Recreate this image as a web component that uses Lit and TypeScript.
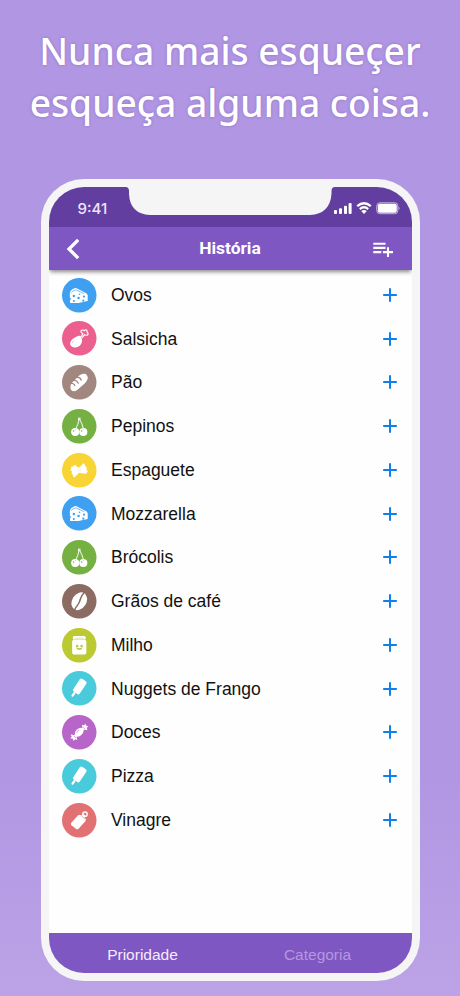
import { LitElement, html, css, svg, SVGTemplateResult } from "lit";
import { customElement, property } from "lit/decorators.js";

type IconName = "cheese" | "meat" | "bread" | "cherry" | "pasta" | "coffee" | "jar" | "frozen" | "candy" | "sauce";

const COLORS: Record<IconName, string> = {
  cheese: "#3f9ff0",
  meat: "#ec6090",
  bread: "#a1877f",
  cherry: "#75b043",
  pasta: "#f9d435",
  coffee: "#8c6c62",
  jar: "#bcca32",
  frozen: "#4acbdc",
  candy: "#b765c8",
  sauce: "#e27174",
};

// Glyphs are drawn around the origin; the disc has a radius of 51 units.
const GLYPHS: Record<IconName, (bg: string) => SVGTemplateResult> = {
  cheese: (bg) => svg`
    <path d="M-28-4Q-28-16-14-21Q-9-22-5-19L22-5L25 0V17L-2 23H-27Z"/>
    <path d="M-24-8Q-20-13-10-16L14-5" fill="none" stroke=${bg} stroke-width="2"/>
    <g fill=${bg}><circle cx="-16" cy="2" r="3.6"/><circle cx="-2" cy="8" r="3.6"/><circle cx="-16" cy="17" r="3"/>
    <circle cx="14" cy="4" r="3.2"/><circle cx="12" cy="16" r="3.2"/><circle cx="1" cy="-3" r="2.3"/><circle cx="-26" cy="11" r="2.3"/></g>`,
  meat: (bg) => svg`
    <path d="M4-7Q-2-9-10-4Q-28 5-27 17Q-25 28-10 27Q4 25 8 11Q9 3 7-1Z"/>
    <path d="M4-3L11-13Q4-17 5-22Q9-27 15-22Q20-28 23-22Q22-19 25-16Q28-11 23-9Q18-8 16-11L8-1" fill="none" stroke="#fff" stroke-width="3.4" stroke-linejoin="round"/>
    <path d="M-21 14Q-20 9-15 7" fill="none" stroke=${bg} stroke-width="1.3"/>`,
  bread: (bg) => svg`
    <path d="M-26 16Q-28 8-20 0L0-20Q8-27 17-25Q26-21 25-10Q24-5 16 4L-6 23Q-16 30-23 24Q-26 21-26 16Z"/>
    <g fill="none" stroke=${bg} stroke-width="3.5" stroke-linecap="round"><path d="M-24 3Q-15 3-13 10"/><path d="M-16-6Q-6-6-3 3"/><path d="M-7-15Q3-15 6-6"/></g>`,
  cherry: (bg) => svg`
    <g fill="none" stroke="#fff" stroke-width="2.8"><path d="M0-23Q-3-5-11 9M0-23Q9-7 13 9"/></g>
    <circle cx="0" cy="-22" r="4"/><circle cx="0" cy="-22" r="1.4" fill=${bg}/>
    <circle cx="-12" cy="17" r="12"/><circle cx="12" cy="17" r="12"/>
    <g fill=${bg}><path d="M-17 6Q-11 11-6 6L-11 10Z"/><path d="M7 6Q13 11 18 6L12 10Z"/><circle cx="-17" cy="14" r="2.2"/><circle cx="7" cy="14" r="2.2"/></g>`,
  pasta: (bg) => svg`
    <path d="M-23-12L-17-11L-14-16L-9-13Q-4-5 3-10L12-21L16-18L18-12L22-9L21-3L25 2L22 9L17 10L7 9Q0 5-4 11L-14 21L-18 19L-19 13L-23 10L-21 4L-26 0L-24-5Z"/>
    <path d="M-5-4L0 0L-3 4M6-5L2-1L4 3" fill="none" stroke=${bg} stroke-width="1"/>`,
  coffee: (bg) => svg`
    <ellipse rx="21" ry="28" transform="rotate(32)"/>
    <path d="M15-26Q7-18 4-8Q1 4-4 10Q-10 17-14 27" fill="none" stroke=${bg} stroke-width="4.5"/>`,
  jar: (bg) => svg`
    <path d="M-16-27H16L19-24V-19L17-17Q21-14 21-10V22Q21 26 17 27H-17Q-21 26-21 22V-10Q-21-14-17-17L-19-19V-24Z"/>
    <path d="M-17-17H17M-14-21H14" stroke=${bg} stroke-width="1.3" fill="none"/>
    <g fill=${bg}><circle cx="-6" cy="2" r="3.8"/><circle cx="7" cy="2" r="3.8"/><path d="M-10 5Q0 12 10 6L7 12Q0 17-7 11Z"/></g>`,
  frozen: () => svg`
    <path d="M1-26Q5-31 10-27L20-20Q24-17 20-12L1 16Q-2 20-6 17L-17 9Q-21 6-17 2Z"/>
    <path d="M-14 14L-20 22" stroke="#fff" stroke-width="6.500" stroke-linecap="round"/>`,
  candy: (bg) => svg`
    <path d="M-12 13Q-16 1-7-8Q2-16 13-12Q15-1 6 8Q-2 15-12 13Z"/>
    <path d="M10-9L8-22L14-20L18-26L20-20L27-17L22-13L24-6ZM-9 9L-26 7L-22 13L-27 18L-19 19L-17 26L-12 21L-6 23Z"/>
    <path d="M-8 2Q-6-4 0-7M-15 11L-10 17M11-15L16-10" fill="none" stroke=${bg} stroke-width="1.8"/>`,
  sauce: (bg) => svg`
    <path d="M-24 8L-4-14Q0-18 5-15L18-5Q21-1 18 3L-2 25Q-6 28-10 25L-23 15Q-26 12-24 8Z"/>
    <path d="M6-14L10-20L19-13L14-6Z"/>
    <circle cx="17" cy="-18" r="6.500" fill="none" stroke="#fff" stroke-width="4"/>
    <path d="M7-12L16-5" stroke=${bg} stroke-width="1.5"/>`,
};

const ITEMS: [string, IconName][] = [
  ["Ovos", "cheese"],
  ["Salsicha", "meat"],
  ["Pão", "bread"],
  ["Pepinos", "cherry"],
  ["Espaguete", "pasta"],
  ["Mozzarella", "cheese"],
  ["Brócolis", "cherry"],
  ["Grãos de café", "coffee"],
  ["Milho", "jar"],
  ["Nuggets de Frango", "frozen"],
  ["Doces", "candy"],
  ["Pizza", "frozen"],
  ["Vinagre", "sauce"],
];

@customElement("category-icon")
class CategoryIcon extends LitElement {
  @property() name: IconName = "cheese";
  static styles = css`
    :host { display: block; width: 34.5px; height: 34.5px; }
    svg { display: block; width: 100%; height: 100%; overflow: visible; }
  `;
  render() {
    const bg = COLORS[this.name];
    return html`<svg viewBox="-51 -51 102 102"><circle r="51" fill=${bg}></circle><g fill="#fff">${GLYPHS[this.name](bg)}</g></svg>`;
  }
}

@customElement("history-row")
class HistoryRow extends LitElement {
  @property() label = "";
  @property() icon: IconName = "cheese";
  static styles = css`
    :host { display: flex; align-items: center; height: 43.75px; padding: 0 14px 0 13.5px; box-sizing: border-box; }
    .label { flex: 1; margin-left: 14.5px; font-size: 17.5px; line-height: 22px; color: #111; white-space: nowrap; }
    .add { display: block; width: 16px; height: 16px; }
  `;
  render() {
    return html`<category-icon .name=${this.icon}></category-icon>
      <span class="label">${this.label}</span>
      <svg class="add" viewBox="0 0 16 16"><path d="M8 1.200v13.600M1.200 8h13.600" stroke="#0f7fea" stroke-width="2"/></svg>`;
  }
}

@customElement("app-root")
class AppRoot extends LitElement {
  static styles = css`
    :host {
      display: flex; flex-direction: column; align-items: center;
      width: 460px; height: 996px; box-sizing: border-box; padding-top: 24.5px; overflow: hidden;
      background: linear-gradient(#b196e3 0 78%, #bca3e6 100%);
      font-family: "Liberation Sans", Arial, sans-serif;
    }
    h1 {
      margin: 0; height: 154px; text-align: center; color: #fff; white-space: nowrap;
      font: 500 37.2px/52px "Noto Sans", sans-serif;
      text-shadow: 0 0 3px rgba(80, 50, 140, 0.35);
    }
    .line { display: block; }
    .phone {
      width: 379px; height: 802.5px; box-sizing: border-box; padding: 8px;
      background: #f5f5f5; border-radius: 43px;
    }
    .screen {
      position: relative; display: flex; flex-direction: column; height: 100%;
      background: #fefefe; border-radius: 35px; overflow: hidden;
    }
    .status {
      display: flex; justify-content: space-between; flex: none; height: 40.5px; box-sizing: border-box;
      padding: 0 12px 0 29px; background: #623ea1;
    }
    .time { margin-top: 12px; font: 500 15px/20px Inter, sans-serif; color: #efe5fb; }
    .notch { position: absolute; left: 75px; top: -1px; width: 213px; height: 30px; fill: #f5f5f5; }
    .signals { margin-top: 14px; width: 67px; height: 14px; }
    .header {
      display: grid; grid-template-columns: 40px 1fr 40px; align-items: center; flex: none; height: 43px;
      padding: 0 14px; background: #7e57c2; color: #fff; box-shadow: 0 3px 4px -1px rgba(0, 0, 0, 0.45); z-index: 1;
    }
    .title { text-align: center; margin-bottom: 2px; font: 700 17.4px/22px Roboto, sans-serif; }
    .back { width: 20px; height: 22px; }
    .playlist { width: 22px; height: 20px; justify-self: end; margin-right: 4px; }
    .list { flex: 1; padding-top: 3px; }
    .tabs {
      display: grid; grid-template-columns: 175px 175px; justify-content: center; align-items: center; flex: none;
      height: 40px; padding-top: 3px; box-sizing: border-box; background: #7e57c2; color: #f7ebff;
      font-size: 15.5px; text-align: center;
    }
    .inactive { color: #b697e0; }
  `;
  render() {
    return html`
      <h1><span class="line">Nunca mais esqueçer</span><span class="line">esqueça alguma coisa.</span></h1>
      <div class="phone">
        <div class="screen">
          <div class="status">
            <span class="time">9:41</span>
            <svg class="signals" viewBox="0 0 67 14" fill="#fff">
              <rect x="1" y="9" width="3" height="4" rx="1"/><rect x="6" y="7.2" width="3" height="5.8" rx="1"/>
              <rect x="11" y="4.8" width="3" height="8.2" rx="1"/><rect x="15.600" y="2" width="3" height="11" rx="1"/>
              <g fill="none" stroke="#fff" stroke-width="2.3"><path d="M24.200 5.200Q31-.8 37.800 5.200M26.800 8.100Q31 4.500 35.200 8.100"/></g>
              <path d="M28.200 10.100Q31 7.800 33.800 10.100L31 13Z"/>
              <rect x="43.800" y="1.800" width="21" height="10.900" rx="3" fill="none" stroke="#c9b6e6" stroke-width="1"/>
              <rect x="44.800" y="2.800" width="19" height="8.900" rx="2"/><path d="M65.600 5.300Q67.300 7.200 65.600 9.100Z" fill="#d2c2ea"/>
            </svg>
            <svg class="notch" viewBox="0 0 213 30"><path d="M0 0V1H1.500Q5 1 5 5V8Q6 28 26 29H186Q206 28 207.500 8V5Q207.500 1 211 1H213V0Z"/></svg>
          </div>
          <div class="header">
            <svg class="back" viewBox="0 0 20 22"><path d="M14 3L6 11L14 19" fill="none" stroke="#fff" stroke-width="3.300" stroke-linecap="square" stroke-linejoin="miter"/></svg>
            <span class="title">História</span>
            <svg class="playlist" viewBox="0 0 22 20"><path d="M1.300 4.700H13.500M1.300 8.900H13.500M1.300 13.100H9.300M10.900 13.100H21M16 8.200V18" fill="none" stroke="#fff" stroke-width="2.100"/></svg>
          </div>
          <div class="list">
            ${ITEMS.map(([label, icon]) => html`<history-row .label=${label} .icon=${icon}></history-row>`)}
          </div>
          <div class="tabs"><span>Prioridade</span><span class="inactive">Categoria</span></div>
        </div>
      </div>
    `;
  }
}
